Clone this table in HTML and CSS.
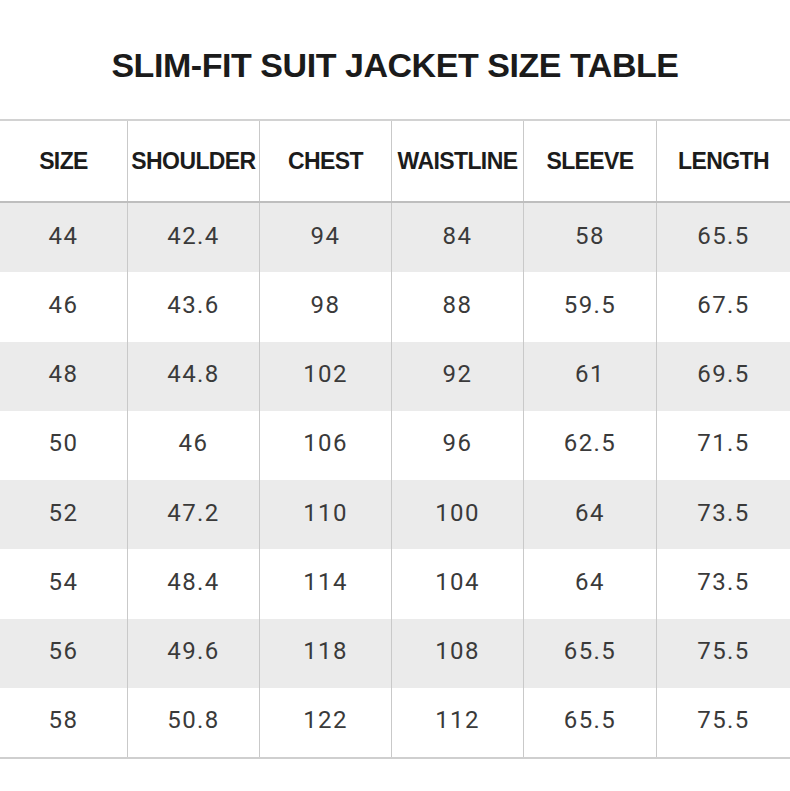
FILE: index.html
```html
<!DOCTYPE html>
<html lang="en">
<head>
<meta charset="utf-8">
<title>Slim-Fit Suit Jacket Size Table</title>
<link rel="stylesheet" href="styles.css">
</head>
<body>
<div class="page">
  <h1 class="title">SLIM-FIT SUIT JACKET SIZE TABLE</h1>
  <div class="table">
    <div class="row head">
      <div class="cell">SIZE</div>
      <div class="cell">SHOULDER</div>
      <div class="cell">CHEST</div>
      <div class="cell">WAISTLINE</div>
      <div class="cell">SLEEVE</div>
      <div class="cell">LENGTH</div>
    </div>
    <div class="row grey"><div class="cell">44</div><div class="cell">42.4</div><div class="cell">94</div><div class="cell">84</div><div class="cell">58</div><div class="cell">65.5</div></div>
    <div class="row"><div class="cell">46</div><div class="cell">43.6</div><div class="cell">98</div><div class="cell">88</div><div class="cell">59.5</div><div class="cell">67.5</div></div>
    <div class="row grey"><div class="cell">48</div><div class="cell">44.8</div><div class="cell">102</div><div class="cell">92</div><div class="cell">61</div><div class="cell">69.5</div></div>
    <div class="row"><div class="cell">50</div><div class="cell">46</div><div class="cell">106</div><div class="cell">96</div><div class="cell">62.5</div><div class="cell">71.5</div></div>
    <div class="row grey"><div class="cell">52</div><div class="cell">47.2</div><div class="cell">110</div><div class="cell">100</div><div class="cell">64</div><div class="cell">73.5</div></div>
    <div class="row"><div class="cell">54</div><div class="cell">48.4</div><div class="cell">114</div><div class="cell">104</div><div class="cell">64</div><div class="cell">73.5</div></div>
    <div class="row grey"><div class="cell">56</div><div class="cell">49.6</div><div class="cell">118</div><div class="cell">108</div><div class="cell">65.5</div><div class="cell">75.5</div></div>
    <div class="row"><div class="cell">58</div><div class="cell">50.8</div><div class="cell">122</div><div class="cell">112</div><div class="cell">65.5</div><div class="cell">75.5</div></div>
  </div>
</div>
</body>
</html>
```

FILE: styles.css
```css
html, body {
  margin: 0;
  padding: 0;
  background: #ffffff;
}

.page {
  width: 790px;
  height: 791px;
  overflow: hidden;
}

.title {
  margin: 0;
  height: 119px;
  box-sizing: border-box;
  padding-top: 10px;
  display: flex;
  align-items: center;
  justify-content: center;
  font-family: "Liberation Sans", Arial, sans-serif;
  font-weight: bold;
  font-size: 34px;
  line-height: 34px;
  letter-spacing: -0.45px;
  color: #1b1b1b;
}

.table {
  border-top: 2px solid #d2d2d2;
  border-bottom: 2px solid #cfcfcf;
}

.row {
  display: grid;
  grid-template-columns: 127px 132px 132px 132px 133px 1fr;
  height: 69.25px;
}

.row.grey {
  background: #ebebeb;
}

.row.head {
  height: 80px;
  border-bottom: 2px solid #bebebe;
}

.cell {
  display: flex;
  align-items: center;
  justify-content: center;
  box-sizing: border-box;
  padding-bottom: 4px;
  font-family: Roboto, "Liberation Sans", sans-serif;
  font-size: 24px;
  line-height: 24px;
  letter-spacing: 1.4px;
  color: #3a3a3a;
  white-space: nowrap;
}

.cell + .cell {
  border-left: 1px solid #c9c9c9;
}

.head .cell {
  padding-bottom: 0;
  font-family: "Liberation Sans", Arial, sans-serif;
  font-weight: bold;
  font-size: 23px;
  letter-spacing: -0.6px;
  color: #1c1c1c;
}
```
